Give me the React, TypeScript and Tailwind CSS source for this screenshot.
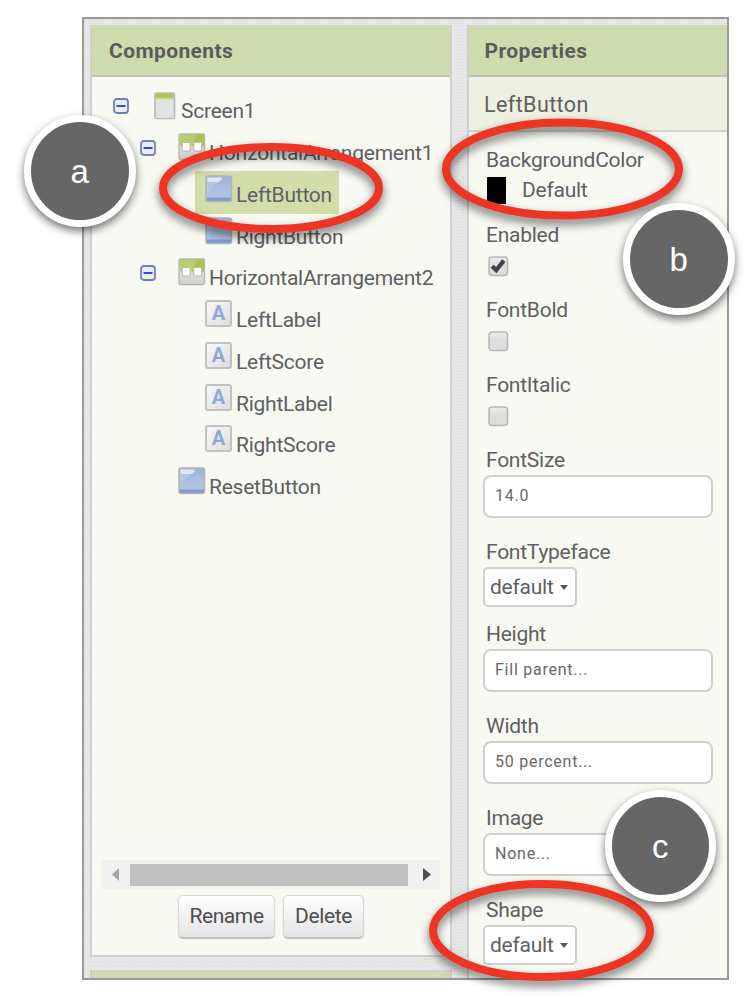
import type { ReactNode } from "react";

const label = "whitespace-nowrap text-[21px] leading-[24px] tracking-[-0.25px] text-[#5f5f63]";

function Toggle() {
  return (
    <svg width="16" height="16" viewBox="0 0 16 16" className="mt-[11px] shrink-0">
      <rect x="1" y="1" width="14" height="14" rx="3" fill="#eceef6" stroke="#7080b4" strokeWidth="1.8" />
      <path d="M3.5 8h9" stroke="#2b43d0" strokeWidth="1.9" />
    </svg>
  );
}

function ScreenIcon() {
  return (
    <svg width="22" height="28" viewBox="0 0 22 28" className="mt-[4.5px] shrink-0">
      <rect x="1" y="1" width="19.5" height="25.5" rx="1.5" fill="#e2e4e4" stroke="#b9bab9" strokeWidth="1.7" />
      <path d="M2 1.5h17.5v4.5H2z" fill="#adc657" />
      <path d="M2 6h17.5v1.5H2z" fill="#cdd99d" />
    </svg>
  );
}

function ArrangementIcon() {
  return (
    <svg width="28" height="28" viewBox="0 0 28 28" className="mt-[4px] shrink-0">
      <defs>
        <linearGradient id="arrangement" x1="0" y1="0" x2="0" y2="1">
          <stop offset="0" stopColor="#e9e9e9" />
          <stop offset="1" stopColor="#d2d2d2" />
        </linearGradient>
      </defs>
      <rect x="1" y="1" width="25.5" height="25.5" rx="1.5" fill="url(#arrangement)" />
      <path d="M1.5 1h24.5v12.5H1.5z" fill="#b7cf68" />
      <path d="M19 1h7v12.5H14z" fill="#a9c350" />
      <rect x="1" y="1" width="25.5" height="25.5" rx="1.5" fill="none" stroke="#b5b7ae" strokeWidth="1.3" />
      <rect x="4.3" y="9.5" width="7.9" height="8.6" rx="1" fill="#fff" stroke="#bcbdb6" strokeWidth="1.2" />
      <rect x="15.7" y="9.5" width="7.9" height="8.6" rx="1" fill="#fff" stroke="#bcbdb6" strokeWidth="1.2" />
    </svg>
  );
}

function ButtonIcon() {
  return (
    <svg width="28" height="28" viewBox="0 0 28 28" className="mt-[4px] shrink-0">
      <defs>
        <linearGradient id="button" x1="0" y1="0" x2="0" y2="1">
          <stop offset="0" stopColor="#a2b8da" />
          <stop offset="1" stopColor="#b5c5e2" />
        </linearGradient>
      </defs>
      <rect x="1" y="1" width="25.5" height="25.5" rx="2" fill="url(#button)" />
      <path d="M2 22C6 13 11 8.5 26 7V2H2z" fill="#9eb5d9" opacity=".5" />
      <path d="M2 22V7h12C8 10 5 15 3.5 22z" fill="#b7c8e3" opacity=".8" />
      <path d="M2.5 2.5h14v2l-2.500 2.500H2.500z" fill="#dde6f3" />
      <path d="M1.5 22.5h24.5V26H1.5z" fill="#829dcd" />
      <rect x="1" y="1" width="25.5" height="25.5" rx="2" fill="none" stroke="#b0b4ba" strokeWidth="1.5" />
    </svg>
  );
}

function LabelIcon() {
  return (
    <span className="mt-[4px] flex size-[27px] shrink-0 items-start justify-center rounded-[3px] border-2 border-[#c1c1c1] bg-linear-to-br from-[#f8f8f8] to-[#dedee0] text-[20px] leading-[23px] font-bold text-[#8fa9d5]">
      A
    </span>
  );
}

function Row({ toggle, icon, name, pad }: { toggle?: boolean; icon: ReactNode; name: string; pad: string }) {
  return (
    <div className={`flex h-[41.75px] shrink-0 items-start ${pad}`}>
      {toggle && <Toggle />}
      {icon}
      <span className={`${label} mt-[12px] ml-[3px]`}>{name}</span>
    </div>
  );
}

function Field({ name, children, height }: { name: string; children: ReactNode; height: string }) {
  return (
    <div className={`flex shrink-0 flex-col items-start pl-[14px] ${height}`}>
      <span className={`${label} ml-[3px] h-[27px]`}>{name}</span>
      {children}
    </div>
  );
}

function TextBox({ value }: { value: string }) {
  return (
    <div className="flex h-[43px] w-[230px] items-center rounded-[8px] border-2 border-[#d0d0cf] bg-white pb-[1px] pl-[10px] text-[16px] tracking-[0.75px] text-[#686868]">
      {value}
    </div>
  );
}

function Select() {
  return (
    <div className="flex h-[40px] w-[94px] items-center rounded-[5px] border-2 border-[#d0d0cf] bg-white pl-[5px]">
      <span className={label}>default</span>
      <svg width="8" height="5" viewBox="0 0 8 5" className="ml-[6px]">
        <path d="M0 0h8L4 5z" fill="#555" />
      </svg>
    </div>
  );
}

function Check({ on }: { on?: boolean }) {
  return (
    <svg width="21" height="21" viewBox="0 0 21 21" className="mt-[6px] ml-[4.5px]">
      <defs>
        <linearGradient id="check" x1="0" y1="0" x2="0" y2="1">
          <stop offset="0" stopColor="#efefef" />
          <stop offset=".4" stopColor="#dedede" />
          <stop offset="1" stopColor="#dcdcdc" />
        </linearGradient>
      </defs>
      <rect x="1" y="1" width="18.5" height="18.5" rx="3.2" fill="url(#check)" stroke="#b8b8b8" strokeWidth="1.6" />
      {on && <path d="M4.2 10.3 8.2 14.2 15.8 4.6" fill="none" stroke="#414246" strokeWidth="4.2" />}
    </svg>
  );
}

function PushButton({ name, width }: { name: string; width: string }) {
  return (
    <button className={`flex h-[43px] items-center justify-center rounded-[5px] border-[1.5px] border-[#d8d8d8] border-b-[#bcbcbc] bg-linear-to-b from-white to-[#e4e4e4] text-[21px] tracking-[-0.4px] text-[#4d4d50] shadow-[0_1px_1px_#bbb] ${width}`}>
      {name}
    </button>
  );
}

function Badge({ letter, place }: { letter: string; place: string }) {
  return (
    <div className={`absolute flex size-[111.5px] items-center justify-center rounded-full border-[7px] border-white bg-[#666] pt-[2px] font-['Liberation_Sans',sans-serif] text-[33px] leading-none text-white shadow-[0_4px_9px_rgba(0,0,0,0.55)] ${place}`}>
      {letter}
    </div>
  );
}

export default function App() {
  return (
    <main className="relative h-[996px] w-[756px] overflow-hidden bg-white pt-[17px] pl-[82px] font-[Roboto,sans-serif]">
      <div className="flex h-[963px] w-[647px] gap-[15px] overflow-hidden border-2 border-[#999] bg-[#e7e7e7] bg-[radial-gradient(#dadada_0.7px,transparent_0.9px)] bg-size-[3px_3px] pt-[6px] pl-[6px]">
        <section className="flex w-[362px] shrink-0 flex-col gap-[13px]">
          <div className="flex h-[932px] shrink-0 flex-col border-2 border-t-1 border-[#d0d0d0] bg-[#f8f9f3]">
            <h2 className="flex h-[51px] shrink-0 items-center border-b-2 border-[#bfc0ba] bg-[#cedbaf] pt-[2px] pl-[17px] text-[21px] font-bold tracking-[0.4px] text-[#5b5b5b]">Components</h2>
            <div className="flex h-[783px] flex-col pt-[10px]">
              <div className="flex h-[41.75px] shrink-0 items-start pl-[21px]">
                <Toggle />
                <span className="w-[25px]" />
                <ScreenIcon />
                <span className={`${label} mt-[12px] ml-[5px]`}>Screen1</span>
              </div>
              <Row toggle icon={<><span className="w-[22px]" /><ArrangementIcon /></>} name="HorizontalArrangement1" pad="pl-[48px]" />
              <div className="ml-[103px] flex h-[43px] w-[144px] shrink-0 items-start bg-[#d3dda9] pl-[10px]">
                <ButtonIcon />
                <span className={`${label} mt-[12px] ml-[3px]`}>LeftButton</span>
              </div>
              <Row icon={<ButtonIcon />} name="RightButton" pad="pl-[113px] -mt-[1px]" />
              <Row toggle icon={<><span className="w-[22px]" /><ArrangementIcon /></>} name="HorizontalArrangement2" pad="pl-[48px]" />
              <Row icon={<><LabelIcon /><span className="w-px" /></>} name="LeftLabel" pad="pl-[113px]" />
              <Row icon={<><LabelIcon /><span className="w-px" /></>} name="LeftScore" pad="pl-[113px]" />
              <Row icon={<><LabelIcon /><span className="w-px" /></>} name="RightLabel" pad="pl-[113px]" />
              <Row icon={<><LabelIcon /><span className="w-px" /></>} name="RightScore" pad="pl-[113px]" />
              <Row icon={<ButtonIcon />} name="ResetButton" pad="pl-[86px]" />
            </div>
            <div className="ml-[10px] flex h-[29px] w-[338px] shrink-0 items-center bg-[#f1f1f1] pl-[10px]">
              <svg width="7" height="13" viewBox="0 0 7 13"><path d="M7 0v13L0 6.5z" fill="#a3a3a3" /></svg>
              <span className="ml-[11px] h-[22px] w-[278px] bg-[#c1c1c1]" />
              <svg width="8" height="13" viewBox="0 0 8 13" className="ml-[15px]"><path d="M0 0v13l8-6.5z" fill="#505050" /></svg>
            </div>
            <div className="mt-[6px] flex gap-[8px] pl-[86px]">
              <PushButton name="Rename" width="w-[97px]" />
              <PushButton name="Delete" width="w-[81px]" />
            </div>
          </div>
          <div className="h-[20px] shrink-0 border-2 border-[#d0d0d0] bg-[#cedbaf]" />
        </section>
        <section className="flex h-[970px] w-[280px] shrink-0 flex-col border-2 border-t-1 border-[#d0d0d0] bg-[#f8f9f3]">
          <h2 className="flex h-[51px] shrink-0 items-center border-b-2 border-[#bfc0ba] bg-[#cedbaf] pt-[2px] pl-[15.5px] text-[21px] font-bold tracking-[0.4px] text-[#5b5b5b]">Properties</h2>
          <div className="flex h-[55px] shrink-0 items-center border-b-2 border-[#d5d6d0] bg-[#eef0e1] pt-[2px] pl-[15px]">
            <span className="text-[21.5px] leading-[24px] tracking-[0.4px] text-[#5f5f63]">LeftButton</span>
          </div>
          <div className="flex h-[91px] shrink-0 flex-col pt-[16px] pl-[17px]">
            <span className={label}>BackgroundColor</span>
            <div className="mt-[5px] ml-[1px] flex items-start">
              <span className="h-[27px] w-[19px] bg-black" />
              <span className={`${label} mt-[1px] ml-[16px]`}>Default</span>
            </div>
          </div>
          <Field name="Enabled" height="h-[75px]"><Check on /></Field>
          <Field name="FontBold" height="h-[75px]"><Check /></Field>
          <Field name="FontItalic" height="h-[75px]"><Check /></Field>
          <Field name="FontSize" height="h-[92px]"><TextBox value="14.0" /></Field>
          <Field name="FontTypeface" height="h-[82px]"><Select /></Field>
          <Field name="Height" height="h-[92px]"><TextBox value="Fill parent..." /></Field>
          <Field name="Width" height="h-[92px]"><TextBox value="50 percent..." /></Field>
          <Field name="Image" height="h-[92px]"><TextBox value="None..." /></Field>
          <Field name="Shape" height="h-[70px]"><Select /></Field>
        </section>
      </div>
      <svg width="756" height="996" viewBox="0 0 756 996" className="absolute top-0 left-0 drop-shadow-[0_5px_5px_rgba(0,0,0,0.55)]">
        <g fill="none" stroke="#ee3524" strokeWidth="8">
          <ellipse cx="271" cy="188" rx="108" ry="41" />
          <ellipse cx="562.5" cy="169" rx="116.5" ry="46.5" />
          <ellipse cx="541.5" cy="930.5" rx="108.5" ry="46.5" />
        </g>
      </svg>
      <Badge letter="a" place="top-[115px] left-[24px]" />
      <Badge letter="b" place="top-[203px] left-[623px]" />
      <Badge letter="c" place="top-[790px] left-[604.5px]" />
    </main>
  );
}
